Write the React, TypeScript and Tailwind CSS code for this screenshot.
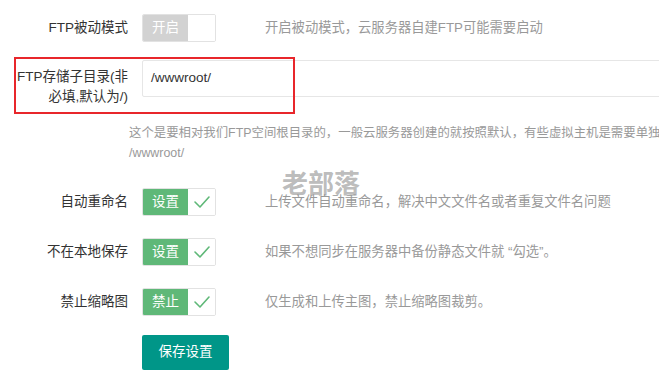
import React from "react";

const FONT = { fontFamily: '"Liberation Sans", "Noto Sans CJK SC", sans-serif' };

function Check() {
  return (
    <svg width="18" height="14" viewBox="0 0 18 14" fill="none">
      <polyline points="2,7 7,12 16,2" stroke="#5fb878" strokeWidth="1.6" strokeLinecap="round" strokeLinejoin="round" />
    </svg>
  );
}

function Switch({ text, on }: { text: string; on: boolean }) {
  return (
    <div className="flex h-[28px] w-[74px] rounded-[2px] border border-[#e2e2e2] overflow-hidden">
      <div
        className={`flex w-[45px] items-center justify-center text-[13.5px] text-white ${
          on ? "bg-[#5fb878]" : "bg-[#d2d2d2]"
        }`}
      >
        {text}
      </div>
      <div className="flex flex-1 items-center justify-center bg-white">{on && <Check />}</div>
    </div>
  );
}

function ToggleRow({ label, text, on, desc, top }: { label: string; text: string; on: boolean; desc: string; top: string }) {
  return (
    <div className={`flex items-center ${top}`}>
      <div className="w-[128px] shrink-0 whitespace-nowrap text-right text-[13.5px] text-[#333]">{label}</div>
      <div className="ml-[14px] shrink-0">
        <Switch text={text} on={on} />
      </div>
      <div className="ml-[49px] whitespace-nowrap text-[13.3px] text-[#999]">{desc}</div>
    </div>
  );
}

export default function App() {
  return (
    <div className="relative h-[378px] w-[659px] overflow-hidden bg-white" style={FONT}>
      <div className="flex flex-col">
        <ToggleRow label="FTP被动模式" text="开启" on={false} desc="开启被动模式，云服务器自建FTP可能需要启动" top="pt-[14px]" />

        {/* sub directory */}
        <div className="flex items-start pt-[18px]">
          <div className="w-[128px] shrink-0 whitespace-nowrap pt-[7px] text-right text-[13.5px] leading-[20px] text-[#333]">
            FTP存储子目录(非
            <br />
            必填,默认为/)
          </div>
          <div className="ml-[14px] flex h-[37px] w-[560px] shrink-0 items-center rounded-[2px] border border-[#e6e6e6] pl-[8px] text-[13.5px] text-[#333]">
            /wwwroot/
          </div>
        </div>

        <div className="ml-[129px] whitespace-nowrap pt-[16px] text-[12.4px] leading-[20px] text-[#999]">
          这个是要相对我们FTP空间根目录的，一般云服务器创建的就按照默认，有些虚拟主机是需要单独
          <br />
          /wwwroot/
        </div>

        <ToggleRow label="自动重命名" text="设置" on desc="上传文件自动重命名，解决中文文件名或者重复文件名问题" top="pt-[25px]" />
        <ToggleRow label="不在本地保存" text="设置" on desc="如果不想同步在服务器中备份静态文件就 “勾选”。" top="pt-[22px]" />
        <ToggleRow label="禁止缩略图" text="禁止" on desc="仅生成和上传主图，禁止缩略图裁剪。" top="pt-[22px]" />

        <div className="ml-[142px] pt-[19px]">
          <button className="h-[35px] w-[87px] rounded-[2px] bg-[#009688] text-[13.5px] text-white">保存设置</button>
        </div>
      </div>

      {/* highlight box */}
      <div className="absolute left-[14px] top-[57px] h-[57px] w-[281px] border-2 border-[#e8262b]" />

      {/* watermark */}
      <div className="absolute left-[282px] top-[168px] text-[26px] font-bold leading-[32px] text-[rgba(150,150,150,0.65)]">
        老部落
      </div>
    </div>
  );
}
